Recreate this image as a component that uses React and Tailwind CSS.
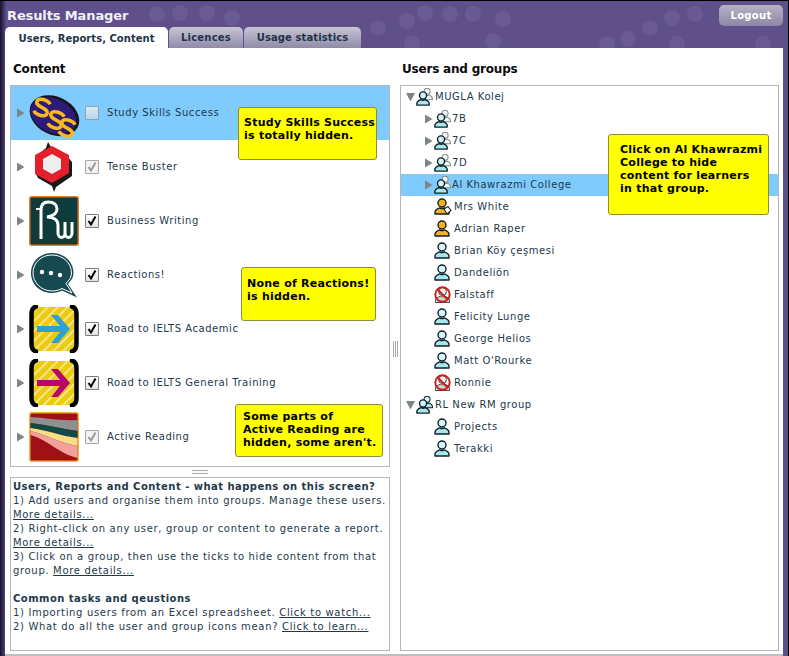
import React from "react";

const Arrow = ({ down, className = "" }) => (
  <svg width="9" height="10" viewBox="0 0 9 10" className={className}>
    {down ? <path d="M0 1H9L4.5 9.5Z" fill="#7d8585" /> : <path d="M1 0.5L8.5 5L1 9.5Z" fill="#7d8585" />}
  </svg>
);

const Person = ({ fill = "#a6e9ec", head, x = 0, y = 0, s = "#10202a", w = 1.4 }) => (
  <g transform={`translate(${x} ${y})`}>
    <circle cx="8" cy="5" r="4" fill={head || (fill === "#f6b21b" ? fill : "#d4f5f5")} stroke={s} strokeWidth={w} />
    <path d="M1 16V14.2C1 11.5 4 10.4 5.8 9.8C7 10.6 9 10.6 10.2 9.8C12 10.4 15 11.5 15 14.2V16Z" fill={fill} stroke={s} strokeWidth={w} strokeLinejoin="round" />
  </g>
);

const UserIcon = () => (
  <svg width="16" height="18" viewBox="0 0 16 18" className="mb-[1px]"><Person /></svg>
);
const TeacherIcon = () => (
  <svg width="16" height="18" viewBox="0 0 16 18" className="mb-[1px]"><Person fill="#f6b21b" /></svg>
);
const AuthorIcon = () => (
  <svg width="18" height="18" viewBox="0 0 18 18" className="mb-[1px]">
    <Person fill="#f6b21b" />
    <path d="M10 11L14 8.5L17 12.5L13 16Z" fill="#fff" stroke="#222" strokeWidth="1.1" />
  </svg>
);
const BlockedIcon = () => (
  <svg width="17" height="17" viewBox="0 0 17 17" className="mb-[1px]">
    <Person fill="#d8d8d8" head="#eeeeee" s="#444" w="1" x="0.5" y="0.5" />
    <circle cx="8.5" cy="8.5" r="7.2" fill="none" stroke="#c9211e" strokeWidth="2" />
    <path d="M3.5 3.5L13.5 13.5" stroke="#c9211e" strokeWidth="2" />
  </svg>
);
const GroupIcon = ({ solid }) => (
  <svg width="18" height="18" viewBox="0 0 18 18" className="mb-[1px]">
    <g transform="translate(5 -0.5) scale(0.76)">
      <Person fill={solid ? "#a6e9ec" : "#f4fafa"} head={solid ? "#d4f5f5" : "#f4fafa"} s={solid ? "#10202a" : "#7f8c8c"} />
    </g>
    <g transform="translate(0 3) scale(0.88)">
      <Person w="1.6" />
    </g>
  </svg>
);

const S = ({ x, y }) => (
  <path transform={`translate(${x} ${y}) rotate(18) scale(1.12)`} d="M6 -5C3 -8 -6 -8 -6 -3.5C-6 1 6 -1 6 3.5C6 8 -3 8 -6 5" fill="none" stroke="#f8b91c" strokeWidth="3.2" />
);
const SSS = () => (
  <svg width="52" height="50" viewBox="0 0 52 50">
    <g transform="rotate(26 26 27.5)">
      <ellipse cx="26.5" cy="27.5" rx="26" ry="19" fill="#15151c" />
      <ellipse cx="25.5" cy="28" rx="24" ry="17" fill="#2e1a78" />
    </g>
    <S x="14" y="19.5" />
    <S x="28" y="32" />
    <S x="39" y="40" />
  </svg>
);
const Tense = () => (
  <svg width="40" height="50" viewBox="0 0 40 50">
    <path d="M14 0L17 5L33 14L38 20V34L22 45L20 50L18 44L4 36L1 30V15L12 6Z" fill="#1a1a1a" />
    <path d="M18 4L35 13V31L18 41L1 32V13Z" fill="#e5202c" />
    <path d="M18 12L27 17V27L18 32L9 27V17Z" fill="#eeeeee" />
  </svg>
);
const BW = () => (
  <svg width="50" height="50" viewBox="0 0 50 50">
    <rect x="0.75" y="0.75" width="48.5" height="48.5" rx="2" fill="#0f3b3c" stroke="#e07a26" strokeWidth="1.5" />
    <path d="M12 43V14C12 8 15 6 19 6C25 6 28 9 28 13C28 18 24 20 18 21C25 21 29 24 29 29V37C29 43 36 43 36 37V26M36 37C36 43 43 43 43 37V26" fill="none" stroke="#fff" strokeWidth="3" />
    <path d="M7 13H13" stroke="#fff" strokeWidth="2" />
  </svg>
);
const Reactions = () => (
  <svg width="48" height="46" viewBox="0 0 48 46">
    <path d="M22 1C10 1 1 9.5 1 21C1 32 10 41 22 41C26 41 29 40 32 38.5L47 45.5L38 32C41.5 28.5 43.5 25 43.5 21C43.5 9.5 34 1 22 1Z" fill="#174a50" />
    <path d="M22 3C11 3 3 11 3 21C3 30 11 39 22 39C26 39 29 38 32 36.5L42 41L36 31.5C39.5 28 41.5 25 41.5 21C41.5 11 33 3 22 3Z" fill="#174a50" stroke="#fff" strokeWidth="1" />
    <circle cx="12" cy="20" r="2.2" fill="#fff" />
    <circle cx="21" cy="21" r="2.2" fill="#fff" />
    <circle cx="30" cy="23" r="2.2" fill="#fff" />
  </svg>
);
const Ielts = ({ color, id }) => (
  <svg width="50" height="48" viewBox="0 0 50 48">
    <defs>
      <pattern id={id} width="7" height="7" patternUnits="userSpaceOnUse" patternTransform="rotate(45)">
        <rect width="7" height="7" fill="#eccb13" />
        <rect width="1.5" height="7" fill="#f7eeb0" />
      </pattern>
    </defs>
    <rect x="4" y="2" width="42" height="44" rx="4" fill={`url(#${id})`} />
    <path d="M7 1.5C4 2.5 2.5 5 2.5 9V39C2.5 43 4 45.5 7 46.5" fill="none" stroke="#000" strokeWidth="4.5" strokeLinecap="round" />
    <path d="M43 1.5C46 2.5 47.5 5 47.5 9V39C47.5 43 46 45.5 43 46.5" fill="none" stroke="#000" strokeWidth="4.5" strokeLinecap="round" />
    <path d="M8 21H31L22 10H29L41 24L29 38H22L31 27H8Z" fill={color} />
  </svg>
);
const ActiveReading = () => (
  <svg width="50" height="50" viewBox="0 0 50 50">
    <rect x="0.75" y="0.75" width="48.5" height="48.5" rx="2" fill="#9f1116" stroke="#f5b23c" strokeWidth="1.5" />
    <path d="M1.5 5C20 6 30 9 48.5 8V19C34 17 18 13 1.5 11Z" fill="#8f8f8f" />
    <path d="M1.5 11C18 13 34 17 48.5 19V26C32 24 18 18 1.5 16Z" fill="#0f4a44" />
    <path d="M1.5 16C18 18 32 24 48.5 26V34C30 31 16 22 1.5 19Z" fill="#f5df85" />
    <path d="M1.5 19C16 22 30 31 48.5 34V46C30 42 20 28 1.5 23Z" fill="#f2a09c" />
  </svg>
);

const Check = ({ on, faded, hi }) => (
  <div className={`w-[14px] h-[14px] shrink-0 border rounded-[1px] flex items-center justify-center ${hi ? "border-[#8fa3b5] bg-gradient-to-b from-[#dbe9f5] to-[#bcd3e8]" : faded ? "border-[#a8a8a8] bg-[#f2f2f2]" : "border-[#7d7d7d] bg-gradient-to-b from-white to-[#e4e4e4]"}`}>
    {on && (
      <svg width="12" height="12" viewBox="0 0 12 12">
        <path d="M2.5 6L5 9.5L9.5 1.5" fill="none" stroke={faded ? "#9a9a9a" : "#000"} strokeWidth="2" />
      </svg>
    )}
  </div>
);

const contents = [
  { name: "Study Skills Success", icon: <SSS />, hi: true },
  { name: "Tense Buster", icon: <Tense />, on: true, faded: true },
  { name: "Business Writing", icon: <BW />, on: true },
  { name: "Reactions!", icon: <Reactions />, on: true },
  { name: "Road to IELTS Academic", icon: <Ielts color="#2aa3d2" id="st1" />, on: true },
  { name: "Road to IELTS General Training", icon: <Ielts color="#b8066a" id="st2" />, on: true },
  { name: "Active Reading", icon: <ActiveReading />, on: true, faded: true },
];

const tree = [
  { n: "MUGLA Kolej", t: "root", solid: false },
  { n: "7B", t: "group" },
  { n: "7C", t: "group" },
  { n: "7D", t: "group" },
  { n: "Al Khawrazmi College", t: "group", hi: true },
  { n: "Mrs White", t: "author" },
  { n: "Adrian Raper", t: "teacher" },
  { n: "Brian Köy çeşmesi", t: "user" },
  { n: "Dandeliön", t: "user" },
  { n: "Falstaff", t: "blocked" },
  { n: "Felicity Lunge", t: "user" },
  { n: "George Helios", t: "user" },
  { n: "Matt O'Rourke", t: "user" },
  { n: "Ronnie", t: "blocked" },
  { n: "RL New RM group", t: "root", solid: true },
  { n: "Projects", t: "user" },
  { n: "Terakki", t: "user" },
];

const Callout = ({ className, children }) => (
  <div className={`absolute bg-[#ffff00] border border-[#8c8c3c] rounded-[3px] text-[11px] leading-[13px] font-bold text-black tracking-[0.25px] whitespace-nowrap ${className}`}>
    {children}
  </div>
);

const L = ({ children }) => <span className="underline">{children}</span>;

const blobs = [[157,13],[180,12],[207,12],[232,17],[378,27],[407,20],[425,12],[450,13],[473,13],[503,18],[412,43],[493,40],[628,38],[650,27],[672,17],[695,13],[607,43],[677,43],[763,43]];

export default function App() {
  return (
    <div className="w-[789px] h-[656px] overflow-hidden bg-black pt-[1px] font-['DejaVu_Sans',sans-serif]">
      <div className="relative h-full flex flex-col pl-[5px] pr-[5px] bg-gradient-to-r from-[#17122e] from-0% via-[#5f4f8a] via-[0.8%] to-[#5f4f8a] border-r-[1px] border-black">
        <svg className="absolute left-0 top-0" width="789" height="48">
          {blobs.map(([x, y], i) => (
            <circle key={i} cx={x} cy={y} r="8" fill="#695a94" />
          ))}
        </svg>
        <div className="relative h-[26px] shrink-0 flex items-center justify-between pl-[2px] pt-[1px]">
          <div className="text-[13px] font-bold text-[#f2f0f7] tracking-[-0.12px] mt-[2px]">Results Manager</div>
          <div className="w-[64px] h-[21px] mt-[2px] rounded-[5px] bg-gradient-to-b from-[#b8b3c4] to-[#8d86a6] flex items-center justify-center text-[10px] font-bold text-white tracking-[0.3px]">Logout</div>
        </div>
        <div className="relative h-[21px] shrink-0 flex gap-[1px] items-end">
          <div className="w-[163px] h-[21px] pt-[2px] rounded-t-[5px] bg-white flex items-center justify-center text-[10px] font-bold text-[#1e3448] tracking-[0.03px]">Users, Reports, Content</div>
          <div className="w-[74px] h-[21px] rounded-t-[5px] bg-gradient-to-b from-[#c9c6d5] to-[#8f8aa8] flex items-center justify-center text-[10px] font-bold text-[#1e3448] tracking-[0.2px] pb-[1px]">Licences</div>
          <div className="w-[117px] h-[21px] rounded-t-[5px] bg-gradient-to-b from-[#c9c6d5] to-[#8f8aa8] flex items-center justify-center text-[10px] font-bold text-[#1e3448] tracking-[0.1px] pb-[1px]">Usage statistics</div>
        </div>
        <div className="relative flex-1 min-h-0 bg-white border-b-2 border-[#bdbdbd] flex pl-[5px] pr-[4px] pb-[3px]">
          <div className="w-[380px] shrink-0 flex flex-col">
            <div className="h-[37px] shrink-0 flex items-center pl-[3px] pt-[4px] text-[12px] font-bold text-[#0a0a0a] tracking-[-0.2px]">Content</div>
            <div className="relative h-[382px] shrink-0 border border-[#b5b5b5]">
              {contents.map((c) => (
                <div key={c.name} className={`h-[54px] flex items-center pl-[5px] ${c.hi ? "bg-[#7fcbfd]" : ""}`}>
                  <Arrow />
                  <div className="w-[52px] ml-[3px] flex items-center justify-center shrink-0">{c.icon}</div>
                  <div className="ml-[5px]"><Check on={c.on} faded={c.faded} hi={c.hi} /></div>
                  <div className="ml-[8px] mb-[1px] text-[10px] tracking-[0.55px] text-[#23394a]">{c.name}</div>
                </div>
              ))}
              <Callout className="left-[227px] top-[21px] w-[139px] h-[53px] pl-[5px] pt-[8px]">Study Skills Success<br />is totally hidden.</Callout>
              <Callout className="left-[230px] top-[181px] w-[135px] h-[54px] pl-[5px] pt-[9px]">None of Reactions!<br />is hidden.</Callout>
              <Callout className="left-[224px] top-[318px] w-[148px] h-[53px] pl-[7px] pt-[5px]">Some parts of<br />Active Reading are<br />hidden, some aren't.</Callout>
            </div>
            <div className="h-[10px] shrink-0 flex flex-col items-center justify-center">
              <div className="w-[16px] h-[4px] border-y border-[#a8a8a8] bg-white"></div>
            </div>
            <div className="flex-1 min-h-0 border border-[#b5b5b5] pl-[2px] pt-[2px] text-[10px] leading-[14px] tracking-[0.67px] text-[#23394a] whitespace-nowrap">
              <div className="font-bold tracking-[0.47px]">Users, Reports and Content - what happens on this screen?</div>
              <div>1) Add users and organise them into groups. Manage these users.</div>
              <div><L>More details...</L></div>
              <div>2) Right-click on any user, group or content to generate a report.</div>
              <div><L>More details...</L></div>
              <div>3) Click on a group, then use the ticks to hide content from that</div>
              <div>group. <L>More details...</L></div>
              <div className="h-[14px]"></div>
              <div className="font-bold tracking-[0.47px]">Common tasks and qeustions</div>
              <div>1) Importing users from an Excel spreadsheet. <L>Click to watch...</L></div>
              <div>2) What do all the user and group icons mean? <L>Click to learn...</L></div>
            </div>
          </div>
          <div className="w-[10px] shrink-0 flex items-center justify-center">
            <div className="w-[5px] h-[16px] mt-[-1px] border-x border-[#a8a8a8] flex justify-center"><div className="w-[1px] h-full bg-[#a8a8a8]"></div></div>
          </div>
          <div className="flex-1 min-w-0 flex flex-col relative">
            <div className="h-[37px] shrink-0 flex items-center pl-[2px] pt-[4px] text-[12px] font-bold text-[#0a0a0a] tracking-[-0.2px]">Users and groups</div>
            <div className="flex-1 min-h-0 border border-[#b5b5b5] text-[10px] tracking-[0.55px] text-[#23394a]">
              {tree.map((r) => {
                const isRoot = r.t === "root";
                const isGroup = r.t === "group";
                return (
                  <div key={r.n} className={`h-[22px] flex items-center ${isRoot ? "pl-[5px]" : isGroup ? "pl-[23px]" : "pl-[33px]"} ${r.hi ? "bg-[#7fcbfd]" : ""}`}>
                    {(isRoot || isGroup) && <Arrow down={isRoot} className="mr-[1px]" />}
                    {(isRoot || isGroup) && <GroupIcon solid={r.solid} />}
                    {r.t === "user" && <UserIcon />}
                    {r.t === "teacher" && <TeacherIcon />}
                    {r.t === "author" && <AuthorIcon />}
                    {r.t === "blocked" && <BlockedIcon />}
                    <span className={`${isRoot ? "ml-[1px]" : isGroup ? "ml-0" : r.t === "author" ? "ml-[2px]" : r.t === "blocked" ? "ml-[3px]" : "ml-[4px]"} mb-[2px]`}>{r.n}</span>
                  </div>
                );
              })}
            </div>
            <Callout className="left-[208px] top-[86px] w-[161px] h-[81px] pl-[11px] pt-[8px]">Click on Al Khawrazmi<br />College to hide<br />content for learners<br />in that group.</Callout>
          </div>
        </div>
      </div>
    </div>
  );
}
